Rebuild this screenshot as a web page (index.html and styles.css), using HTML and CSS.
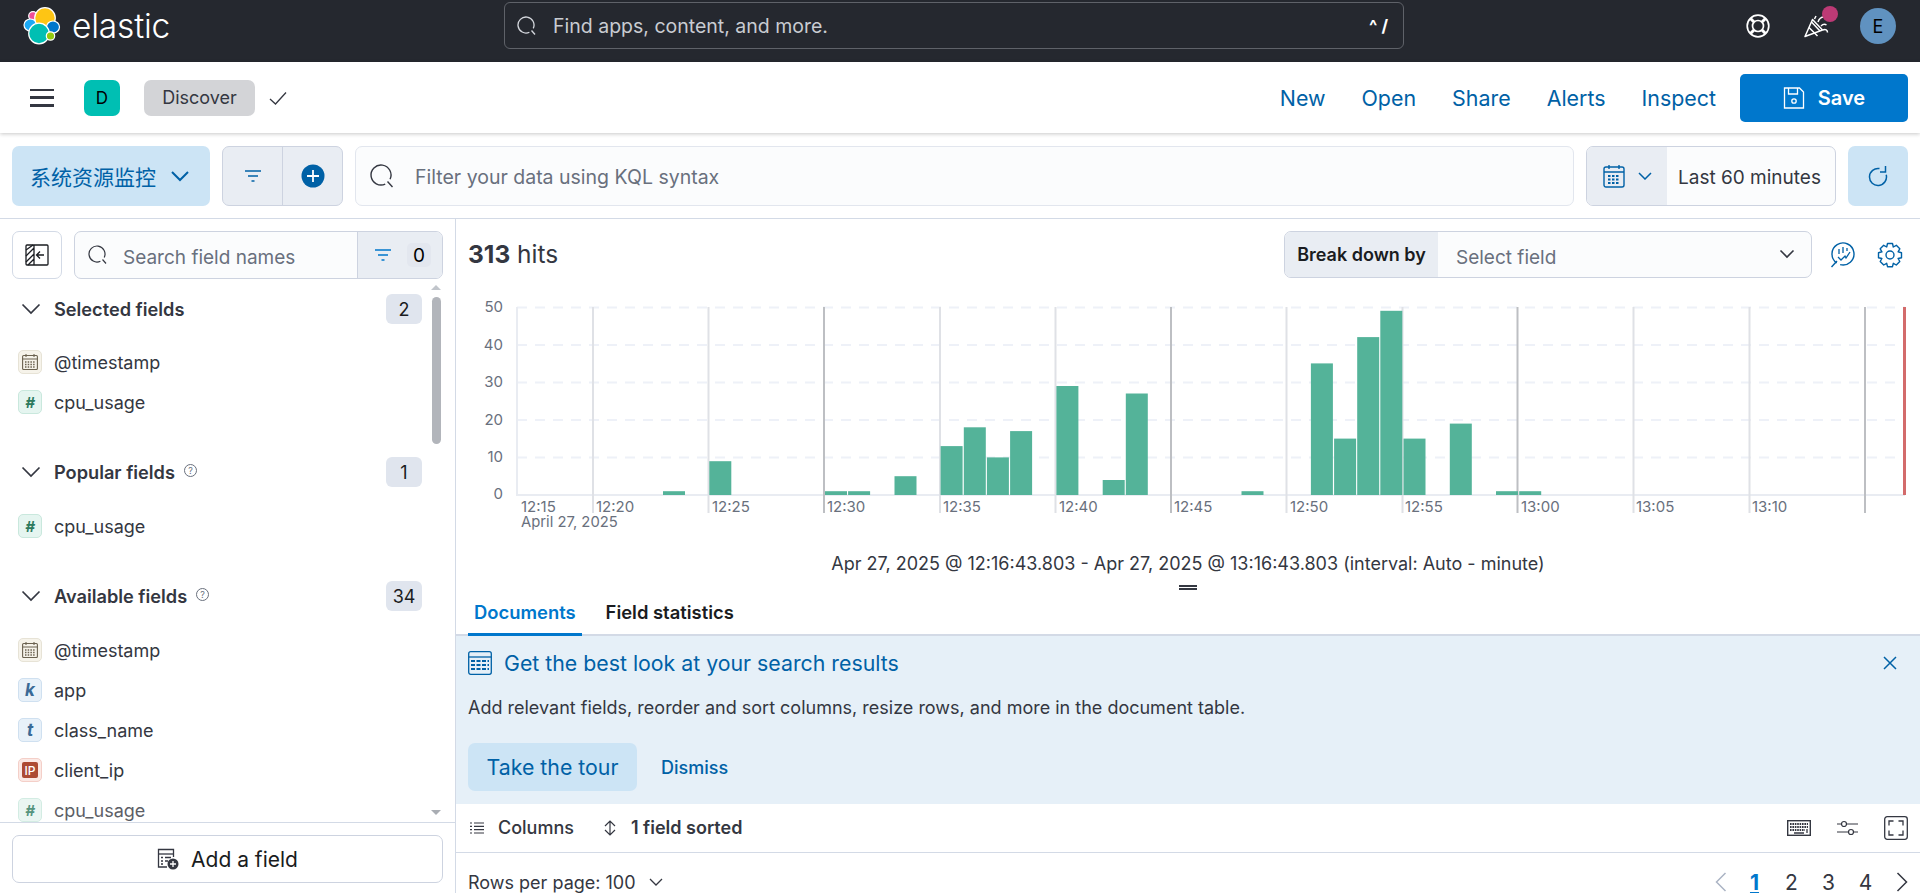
FILE: index.html
```html
<!DOCTYPE html>
<html lang="en">
<head>
<meta charset="utf-8">
<title>Discover - Elastic</title>
<link rel="stylesheet" href="styles.css">
</head>
<body>
<header class="topbar">
  <div class="brand">
    <svg class="logo" width="38" height="38" viewBox="0 0 38 38">
      <g stroke="#fff" stroke-width="1.200">
        <circle cx="10" cy="9" r="4.300" fill="#f04e98"/>
        <ellipse cx="7.500" cy="18" rx="6.500" ry="6" fill="#1ba9f5"/>
        <circle cx="22" cy="11" r="10.300" fill="#fec514"/>
        <ellipse cx="30" cy="20" rx="6.500" ry="6" fill="#0077cc"/>
        <circle cx="16" cy="26.500" r="10.300" fill="#00bfb3"/>
        <circle cx="27.500" cy="29" r="4.200" fill="#93c90e"/>
      </g>
    </svg>
    <span class="wordmark">elastic</span>
  </div>
  <div class="global-search">
    <svg class="ic" width="20" height="20" viewBox="0 0 20 20" fill="none" stroke="#d5d8de" stroke-width="1.300"><path d="M16.250 12.380A8 8 0 1 0 12.380 16.250"/><path d="M14.500 14.500l3.500 4"/></svg>
    <span class="gs-text">Find apps, content, and more.</span>
    <span class="gs-key">^ /</span>
  </div>
  <div class="top-icons">
    <svg width="26" height="26" viewBox="0 0 26 26" fill="none" stroke="#fff" stroke-width="1.700"><circle cx="13" cy="13" r="10.800"/><circle cx="13" cy="13" r="5.500"/><path d="M5.500 5.500l3.500 3.500M20.500 5.500L17 9M5.500 20.500L9 17M20.500 20.500L17 17" stroke-width="3"/></svg>
    <span class="party">
      <svg width="26" height="30" viewBox="0 0 26 30" fill="none" stroke="#fff" stroke-width="1.500" stroke-linejoin="round"><path d="M1 25.500l7.500-17 10 10.500z"/><path d="M5 16.500l8.500 8.500M7.500 11l8.500 9"/><path d="M10.500 8l1.500-3M14 11c1-3 3-5 6-5M17 15c2-2 4-2 5.500-1M19 19c2.500-1 4.500 0 4.500 2.500"/></svg>
      <i class="dot"></i>
    </span>
    <span class="avatar">E</span>
  </div>
</header>

<nav class="appbar">
  <button class="burger" aria-label="menu"><i></i><i></i><i></i></button>
  <span class="space">D</span>
  <span class="crumb">Discover</span>
  <svg class="check" width="20" height="20" viewBox="0 0 20 20" fill="none" stroke="#343741" stroke-width="1.300"><path d="M2 11l5.500 5L18 4.500"/></svg>
  <div class="menu">
    <a>New</a><a>Open</a><a>Share</a><a>Alerts</a><a>Inspect</a>
    <button class="save">
      <svg width="22" height="22" viewBox="0 0 22 22" fill="none" stroke="#fff" stroke-width="1.300"><path d="M1.500 1h15l4 4v16h-19z"/><path d="M5.500 1v6h9V1"/><circle cx="11" cy="14" r="2.200"/></svg>
      Save
    </button>
  </div>
</nav>

<section class="querybar">
  <button class="dataview">系统资源监控
    <svg width="20" height="12" viewBox="0 0 20 12" fill="none" stroke="#0061a6" stroke-width="2"><path d="M2 2l8 8 8-8"/></svg>
  </button>
  <div class="filter-group">
    <span class="fg-cell">
      <svg width="16" height="12" viewBox="0 0 16 12" fill="none" stroke="#0061a6" stroke-width="1.400"><path d="M0 1h16M3 6h10M6.500 11h3"/></svg>
    </span>
    <span class="fg-cell fg-sep">
      <svg width="24" height="24" viewBox="0 0 24 24"><circle cx="12" cy="12" r="11.500" fill="#0061a6"/><path d="M12 6v12M6 12h12" stroke="#fff" stroke-width="1.800"/></svg>
    </span>
  </div>
  <div class="kql">
    <svg width="26" height="26" viewBox="0 0 26 26" fill="none" stroke="#343741" stroke-width="1.400"><path d="M21.060 16.230A10 10 0 1 0 16.230 21.060"/><path d="M18.500 18.500l5 5.500"/></svg>
    <span>Filter your data using KQL syntax</span>
  </div>
  <div class="datepick">
    <span class="dp-left">
      <svg width="22" height="24" viewBox="0 0 22 24" fill="none" stroke="#0061a6" stroke-width="1.400"><rect x="1" y="3" width="20" height="20" rx="2"/><path d="M1 8h20M6 1v4M16 1v4"/><path d="M5 12h12M5 15.500h12M5 19h12" stroke-width="2" stroke-dasharray="2.500 1.500"/></svg>
      <svg width="14" height="8" viewBox="0 0 14 8" fill="none" stroke="#0061a6" stroke-width="1.500"><path d="M1 1l6 6 6-6"/></svg>
    </span>
    <span class="dp-text">Last 60 minutes</span>
  </div>
  <button class="refresh" aria-label="refresh">
    <svg width="20" height="22" viewBox="0 0 20 22" fill="none" stroke="#0061a6" stroke-width="1.500"><path d="M11.500 3.600A8.500 8.500 0 1 0 18.200 9.800"/><path d="M17.500 1v6H12"/></svg>
  </button>
</section>

<div class="workspace">
  <aside class="sidebar">
    <div class="side-top">
      <button class="collapse" aria-label="collapse">
        <svg width="24" height="22" viewBox="0 0 24 22" fill="none" stroke="#1a1c21" stroke-width="1.300"><rect x="1" y="1" width="22" height="20" rx="1"/><path d="M1 6l7-5M1 12l8-8M1 18l8-8M3 21l6-6M9 1v20" /><path d="M19 11h-7M15 7.500L11.500 11l3.500 3.500"/></svg>
      </button>
      <div class="fieldsearch">
        <span class="fs-input">
          <svg width="20" height="20" viewBox="0 0 20 20" fill="none" stroke="#343741" stroke-width="1.200"><path d="M16.250 12.380A8 8 0 1 0 12.380 16.250"/><path d="M14.500 14.500l3.500 4"/></svg>
          <span>Search field names</span>
        </span>
        <span class="fs-filter">
          <svg width="16" height="12" viewBox="0 0 16 12" fill="none" stroke="#0077cc" stroke-width="1.400"><path d="M0 1h16M3 6h10M6.500 11h3"/></svg>
          <b class="zero">0</b>
        </span>
      </div>
    </div>
    <div class="fieldlist">
      <div class="scroll-inner">
        <div class="grp">
          <svg class="chev" width="20" height="12" viewBox="0 0 20 12" fill="none" stroke="#343741" stroke-width="1.700"><path d="M1.500 1.500L10 10l8.500-8.500"/></svg>
          <span class="grp-title">Selected fields</span>
          <span class="count">2</span>
        </div>
        <ul class="fields sel">
          <li><i class="tk tk-date"><svg width="16" height="16" viewBox="0 0 16 16" fill="none" stroke="#6b6250" stroke-width="1.100"><rect x=".6" y="1.500" width="14.800" height="14" rx="1"/><path d="M.6 5h14.800M4 0v3M12 0v3"/><path d="M3 8h10M3 10.500h10M3 13h10" stroke-dasharray="1.500 1.200" stroke-width="1.300"/></svg></i>@timestamp</li>
          <li><i class="tk tk-num">#</i>cpu_usage</li>
        </ul>
        <div class="grp">
          <svg class="chev" width="20" height="12" viewBox="0 0 20 12" fill="none" stroke="#343741" stroke-width="1.700"><path d="M1.500 1.500L10 10l8.500-8.500"/></svg>
          <span class="grp-title">Popular fields</span>
          <span class="help">?</span>
          <span class="count">1</span>
        </div>
        <ul class="fields pop">
          <li><i class="tk tk-num">#</i>cpu_usage</li>
        </ul>
        <div class="grp">
          <svg class="chev" width="20" height="12" viewBox="0 0 20 12" fill="none" stroke="#343741" stroke-width="1.700"><path d="M1.500 1.500L10 10l8.500-8.500"/></svg>
          <span class="grp-title">Available fields</span>
          <span class="help">?</span>
          <span class="count">34</span>
        </div>
        <ul class="fields avail">
          <li><i class="tk tk-date"><svg width="16" height="16" viewBox="0 0 16 16" fill="none" stroke="#6b6250" stroke-width="1.100"><rect x=".6" y="1.500" width="14.800" height="14" rx="1"/><path d="M.6 5h14.800M4 0v3M12 0v3"/><path d="M3 8h10M3 10.500h10M3 13h10" stroke-dasharray="1.500 1.200" stroke-width="1.300"/></svg></i>@timestamp</li>
          <li><i class="tk tk-kw">k</i>app</li>
          <li><i class="tk tk-kw">t</i>class_name</li>
          <li><i class="tk tk-ip"><b>IP</b></i>client_ip</li>
          <li class="fade"><i class="tk tk-num">#</i>cpu_usage</li>
        </ul>
      </div>
      <div class="scrollbar">
        <i class="arrow up"></i>
        <i class="thumb"></i>
        <i class="arrow down"></i>
      </div>
    </div>
    <div class="side-foot">
      <button class="addfield">
        <svg width="22" height="22" viewBox="0 0 22 22" fill="none" stroke="#343741" stroke-width="1.300"><path d="M10 19H1.500V1.500h15V9"/><path d="M1.500 6h15"/><path d="M4 9.500h2M8 9.500h6M4 13h2M8 13h3M4 16h2" stroke-width="1.500"/><circle cx="16" cy="16" r="5.500" fill="#343741" stroke="none"/><path d="M16 13v6M13 16h6" stroke="#fff" stroke-width="1.300"/></svg>
        Add a field
      </button>
    </div>
  </aside>

  <main class="main">
    <div class="hitsrow">
      <div class="hits"><b>313</b> hits</div>
      <div class="breakdown">
        <span class="bd-label">Break down by</span>
        <span class="bd-select">Select field
          <svg width="16" height="10" viewBox="0 0 16 10" fill="none" stroke="#343741" stroke-width="1.600"><path d="M1.500 1.500L8 8l6.500-6.500"/></svg>
        </span>
      </div>
      <svg class="bd-ic" width="26" height="26" viewBox="0 0 26 26" fill="none" stroke="#0061a6" stroke-width="1.400"><path d="M6.700 21A11 11 0 1 1 10.150 22.600"/><path d="M7 19l-5.500 6"/><path d="M8 15l3 3 4-4 1 2 4-6M9 7v5M13 5v6M17 6v3" stroke-width="1.300"/></svg>
      <svg class="bd-ic" width="26" height="26" viewBox="0 0 26 26" fill="none" stroke="#0061a6" stroke-width="1.400"><circle cx="13" cy="13" r="4"/><path d="M10.500 1.500h5l.8 3.500 3-1.700 3.500 3.500-1.700 3 3.400.9v5l-3.400.8 1.700 3-3.500 3.500-3-1.700-.8 3.400h-5l-.8-3.400-3 1.700-3.500-3.500 1.700-3-3.400-.8v-5l3.400-.9-1.700-3 3.500-3.500 3 1.700z" stroke-linejoin="round"/></svg>
    </div>
    <svg class="chart" width="1464" height="250" viewBox="456 290 1464 250">
      <g class="grid">
        <path d="M517 307.500H1905M517 345H1905M517 382.500H1905M517 420H1905M517 457.500H1905"/>
      </g>
      <path class="axis0" d="M517 307V495H1905"/>
      <path class="tick" d="M593 307V513M708.500 307V513M940 307V513M1055.500 307V513M1286.500 307V513M1402.500 307V513M1633.500 307V513M1749.500 307V513"/>
      <path class="tick-dark" d="M824 307V513M1171 307V513M1517.500 307V513M1865 307V513"/>
      <g class="bars">
        <rect x="663" y="491.200" width="22" height="3.800"/>
        <rect x="709.300" y="461.200" width="22" height="33.800"/>
        <rect x="825" y="491.200" width="22" height="3.800"/>
        <rect x="848.100" y="491.200" width="22" height="3.800"/>
        <rect x="894.500" y="476.200" width="22" height="18.800"/>
        <rect x="940.600" y="446.100" width="22" height="48.900"/>
        <rect x="963.800" y="427.300" width="22" height="67.700"/>
        <rect x="986.900" y="457.400" width="22" height="37.600"/>
        <rect x="1010.100" y="431.100" width="22" height="63.900"/>
        <rect x="1056.400" y="386" width="22" height="109"/>
        <rect x="1102.700" y="480" width="22" height="15"/>
        <rect x="1125.800" y="393.500" width="22" height="101.500"/>
        <rect x="1241.500" y="491.200" width="22" height="3.800"/>
        <rect x="1310.900" y="363.400" width="22" height="131.600"/>
        <rect x="1334.100" y="438.600" width="22" height="56.400"/>
        <rect x="1357.200" y="337.100" width="22" height="157.900"/>
        <rect x="1380.300" y="310.800" width="22" height="184.200"/>
        <rect x="1403.500" y="438.600" width="22" height="56.400"/>
        <rect x="1449.800" y="423.600" width="22" height="71.400"/>
        <rect x="1496" y="491.200" width="22" height="3.800"/>
        <rect x="1519.200" y="491.200" width="22" height="3.800"/>
      </g>
      <rect class="now" x="1903" y="307" width="3" height="188"/>
      <g class="ylab">
        <text x="503" y="312">50</text><text x="503" y="349.500">40</text><text x="503" y="387">30</text><text x="503" y="424.500">20</text><text x="503" y="462">10</text><text x="503" y="499">0</text>
      </g>
      <g class="xlab">
        <text x="521" y="512">12:15</text><text x="596" y="512">12:20</text><text x="712" y="512">12:25</text><text x="827" y="512">12:30</text><text x="943" y="512">12:35</text><text x="1059" y="512">12:40</text><text x="1174" y="512">12:45</text><text x="1290" y="512">12:50</text><text x="1405" y="512">12:55</text><text x="1521" y="512">13:00</text><text x="1636" y="512">13:05</text><text x="1752" y="512">13:10</text>
        <text class="xdate" x="521" y="527">April 27, 2025</text>
      </g>
    </svg>
    <div class="caption">Apr 27, 2025 @ 12:16:43.803 - Apr 27, 2025 @ 13:16:43.803 (interval: Auto - minute)</div>
    <div class="resize"><i></i><i></i></div>
    <div class="tabs">
      <span class="tab on">Documents</span>
      <span class="tab">Field statistics</span>
    </div>
    <div class="callout">
      <div class="co-head">
        <svg width="24" height="24" viewBox="0 0 24 24" fill="none" stroke="#0061a6" stroke-width="1.300"><rect x=".7" y=".7" width="22.600" height="22.600" rx="2"/><path d="M.7 6h22.600"/><path d="M3 10h18M3 14h18M3 18h18" stroke-width="1.800" stroke-dasharray="4 1.500"/></svg>
        <span class="co-title">Get the best look at your search results</span>
        <svg class="co-x" width="16" height="16" viewBox="0 0 16 16" fill="none" stroke="#0061a6" stroke-width="1.500"><path d="M2 2l12 12M14 2L2 14"/></svg>
      </div>
      <p class="co-text">Add relevant fields, reorder and sort columns, resize rows, and more in the document table.</p>
      <div class="co-actions">
        <button class="tour">Take the tour</button>
        <a class="dismiss">Dismiss</a>
      </div>
    </div>
    <div class="grid-tools">
      <svg width="14" height="12" viewBox="0 0 14 12" fill="none" stroke="#343741" stroke-width="1.200"><path d="M0 1h2M4 1h10M0 4.300h2M4 4.300h10M0 7.600h2M4 7.600h10M0 11h2M4 11h10"/></svg>
      <span class="gt-cols">Columns</span>
      <svg class="gt-sort" width="12" height="16" viewBox="0 0 12 16" fill="none" stroke="#343741" stroke-width="1.200"><path d="M6 1v14M1 6l5-5 5 5M1 10l5 5 5-5"/></svg>
      <span class="gt-sorted">1 field sorted</span>
      <span class="gt-right">
        <svg width="24" height="16" viewBox="0 0 24 16" fill="none" stroke="#343741"><rect x=".7" y=".7" width="22.600" height="14.600" stroke-width="1.400"/><path d="M3 4h18M3 7h18M3 10h15" stroke-width="1.800" stroke-dasharray="1.600 .8"/><path d="M7 13h10M20 9v4" stroke-width="1.300"/></svg>
        <svg width="21" height="16" viewBox="0 0 21 16" fill="none" stroke="#343741" stroke-width="1.200"><circle cx="7" cy="4" r="2.500"/><circle cx="14" cy="12" r="2.500"/><path d="M0 4h4.500M9.500 4H21M0 12h11.500M16.500 12H21"/></svg>
        <svg width="24" height="24" viewBox="0 0 24 24" fill="none" stroke="#343741" stroke-width="1.300"><rect x=".7" y=".7" width="22.600" height="22.600" rx="2.500"/><path d="M5 9.500V5h4.500M14.500 5H19v4.500M19 14.500V19h-4.500M9.500 19H5v-4.500"/></svg>
      </span>
    </div>
    <div class="pager-row">
      <span class="rpp">Rows per page: 100
        <svg width="14" height="8" viewBox="0 0 14 8" fill="none" stroke="#343741" stroke-width="1.300"><path d="M1 1l6 6 6-6"/></svg>
      </span>
      <span class="pager">
        <svg width="12" height="20" viewBox="0 0 12 20" fill="none" stroke="#abb4c4" stroke-width="1.500"><path d="M10.500 1L1.500 10l9 9"/></svg>
        <b class="pg cur">1</b><span class="pg">2</span><span class="pg">3</span><span class="pg">4</span>
        <svg class="pg-next" width="12" height="20" viewBox="0 0 12 20" fill="none" stroke="#343741" stroke-width="1.500"><path d="M1.500 1l9 9-9 9"/></svg>
      </span>
    </div>
  </main>
</div>
</body>
</html>
```
FILE: styles.css
```css
* { box-sizing: border-box; }
html, body { margin: 0; height: 100%; }
body {
  display: flex;
  flex-direction: column;
  height: 893px;
  overflow: hidden;
  font-family: Inter, "Noto Sans CJK SC", sans-serif;
  color: #343741;
  background: #fff;
}
button { font-family: inherit; border: 0; cursor: pointer; }
ul { list-style: none; margin: 0; padding: 0; }

.topbar {
  height: 62px;
  flex: none;
  display: flex;
  align-items: flex-start;
  background: #25282f;
  padding: 0 24px 0 23px;
}
.brand { width: 481px; flex: none; display: flex; align-items: center; gap: 11px; margin-top: 7px; }
.logo { flex: none; }
.wordmark { color: #fff; font-size: 33.500px; font-weight: 300; letter-spacing: -.2px; line-height: 38px; }
.global-search {
  width: 900px;
  height: 47px;
  flex: none;
  margin-top: 2px;
  border: 1px solid #5f6269;
  border-radius: 6px;
  display: flex;
  align-items: center;
  padding: 1px 15px 0 12px;
  color: #c9ccd2;
}
.gs-text { margin-left: 16px; font-size: 19.500px; }
.gs-key { margin-left: auto; color: #fff; font-size: 17px; font-weight: 700; }
.top-icons { margin-left: auto; margin-top: 8px; height: 36px; display: flex; align-items: center; gap: 30px; }
.party { display: block; position: relative; height: 30px; margin-left: 3px; }
.dot { position: absolute; top: -5px; left: 18px; width: 16px; height: 16px; border-radius: 50%; background: #bc3a75; }
.avatar {
  width: 36px; height: 36px; border-radius: 50%;
  background: #6092c0; color: #000; font-size: 18px;
  display: flex; align-items: center; justify-content: center;
}

.appbar {
  height: 71px;
  flex: none;
  display: flex;
  align-items: center;
  padding: 0 12px 0 30px;
  background: #fff;
  box-shadow: 0 1px 4px rgba(0,0,0,.22);
  position: relative;
}
.burger { width: 24px; height: 18px; padding: 0; background: none; display: flex; flex-direction: column; justify-content: space-between; }
.burger i { display: block; height: 2.500px; background: #343741; }
.space {
  margin-left: 30px; width: 36px; height: 36px; border-radius: 7px;
  background: #00bfb3; color: #000; font-size: 17px;
  display: flex; align-items: center; justify-content: center;
}
.crumb {
  margin-left: 24px; width: 111px; height: 36px; border-radius: 7px;
  background: #d3d4d7; font-size: 18px;
  display: flex; align-items: center; justify-content: center;
}
.check { margin-left: 13px; }
.menu { margin-left: auto; display: flex; align-items: center; gap: 36px; }
.menu a { color: #0061a6; font-size: 21.400px; font-weight: 400; }
.save {
  width: 168px; height: 48px; margin-left: -12px; border-radius: 5px;
  background: #0077cc; color: #fff; font-size: 20px; font-weight: 600;
  display: flex; align-items: center; justify-content: center; gap: 13px;
}

.querybar {
  height: 86px;
  flex: none;
  display: flex;
  align-items: center;
  gap: 12px;
  padding: 1px 12px 0;
  border-bottom: 1px solid #d3dae6;
}
.dataview {
  width: 198px; height: 60px; flex: none; border-radius: 7px; background: #cce4f5;
  color: #0061a6; font-size: 21px; font-weight: 400;
  display: flex; align-items: center; justify-content: center; gap: 14px; padding: 0 2px 0 0;
}
.filter-group {
  width: 121px; height: 60px; flex: none; display: flex;
  background: #e9edf3; border: 1px solid #cdd3e0; border-radius: 7px;
}
.fg-cell { flex: 1; display: flex; align-items: center; justify-content: center; }
.fg-sep { border-left: 1px solid #cdd3e0; }
.kql {
  flex: 1; height: 60px; background: #fbfcfd; border: 1px solid #e2e6ee; border-radius: 7px;
  display: flex; align-items: center; gap: 20px; padding: 2px 0 0 13px;
  color: #69707d; font-size: 19.500px;
}
.kql svg { margin-top: -2px; }
.datepick {
  width: 250px; height: 60px; flex: none; display: flex; overflow: hidden;
  border: 1px solid #cdd3e0; border-radius: 7px; background: #fbfcfd;
}
.dp-left { width: 80px; background: #e9edf3; display: flex; align-items: center; justify-content: center; gap: 13px; }
.dp-text { flex: 1; display: flex; align-items: center; padding: 3px 0 0 11px; color: #343741; font-size: 19px; }
.refresh {
  width: 60px; height: 60px; flex: none; border-radius: 7px; background: #cce4f5;
  display: flex; align-items: center; justify-content: center; padding: 0;
}

.workspace { flex: 1; display: flex; min-height: 0; }
.sidebar {
  width: 456px; flex: none; display: flex; flex-direction: column;
  border-right: 1px solid #d3dae6;
}
.side-top { flex: none; display: flex; gap: 12px; padding: 12px 12px 0; }
.collapse {
  width: 50px; height: 48px; flex: none; border-radius: 7px; background: #fff; border: 1px solid #d3dae6;
  display: flex; align-items: center; justify-content: center; padding: 0;
}
.fieldsearch {
  flex: 1; height: 48px; display: flex; border: 1px solid #cdd3e0; border-radius: 7px; overflow: hidden;
  background: #fbfcfd;
}
.fs-input { flex: 1; display: flex; align-items: center; gap: 15px; padding: 4px 0 0 13px; color: #69707d; font-size: 19px; }
.fs-input svg { margin-top: -4px; }
.fs-filter { width: 85px; background: #e9edf3; border-left: 1px solid #cdd3e0; display: flex; align-items: center; gap: 16px; padding-left: 17px; }
.zero { width: 24px; height: 24px; border-radius: 5px; background: #e3e7ef; color: #000; font-size: 19px; font-weight: 400; display: flex; align-items: center; justify-content: center; }

.fieldlist { flex: 1; min-height: 0; display: flex; position: relative; overflow: hidden; }
.scroll-inner { flex: 1; padding: 15px 0 0 21px; }
.grp { height: 30px; display: flex; align-items: center; width: 401px; }
.chev { flex: none; }
.grp-title { margin-left: 13px; font-size: 18.200px; font-weight: 600; color: #343741; }
.help {
  width: 13px; height: 13px; margin: -4px 0 0 9px; border: 1px solid #69707d; border-radius: 50%;
  font-size: 9px; color: #69707d; display: flex; align-items: center; justify-content: center;
}
.count {
  margin-left: auto; min-width: 36px; height: 30px; border-radius: 6px; background: #e0e5ee; color: #1a1c21;
  font-size: 18px; display: flex; align-items: center; justify-content: center;
}
.fields li { height: 40px; display: flex; align-items: center; margin-left: -3px; font-size: 18px; color: #343741; }
.fields.sel { padding: 18px 0 35px; }
.fields.pop { padding: 19px 0 35px; }
.fields.avail { padding: 19px 0 0; }
.fields li.fade { opacity: .8; }
.tk {
  width: 24px; height: 24px; flex: none; margin-right: 12px; border-radius: 5px; border: 1px solid;
  display: flex; align-items: center; justify-content: center;
  font-family: Inter, sans-serif; font-style: italic; font-weight: 700; font-size: 16px;
}
.tk-date { background: #f6f3ea; border-color: #e7e3d6; }
.tk-num { background: #e5f5f0; border-color: #c9e8dd; color: #2c7a5e; font-size: 15px; }
.tk-kw { background: #e8f1f9; border-color: #cfe0f0; color: #3a6a96; font-size: 17px; }
.tk-ip { background: #fbe9e5; border-color: #f4cfc8; }
.tk-ip b { display: flex; align-items: center; justify-content: center; width: 16px; height: 16px; border-radius: 2px; background: #ad4a33; color: #fff; font: 500 12px Inter, sans-serif; }
.scrollbar { width: 10px; margin-right: 14px; flex: none; display: flex; flex-direction: column; align-items: center; padding-top: 6px; }
.arrow { width: 0; height: 0; flex: none; border-left: 5px solid transparent; border-right: 5px solid transparent; }
.arrow.up { border-bottom: 5px solid #c1c5cb; }
.arrow.down { border-top: 5px solid #a9adb3; margin-top: 366px; }
.thumb { width: 9px; height: 147px; margin-top: 7px; border-radius: 5px; background: #b2b5bb; flex: none; }
.side-foot { height: 71px; flex: none; border-top: 1px solid #d3dae6; padding: 12px; }
.addfield {
  width: 100%; height: 48px; border-radius: 7px; background: #fff; border: 1px solid #cdd3e0;
  color: #1a1c21; font-size: 21px; display: flex; align-items: center; justify-content: center; gap: 12px;
}

.main { flex: 1; min-width: 0; display: flex; flex-direction: column; }
.hitsrow { height: 71px; flex: none; display: flex; align-items: flex-start; padding: 12px 17px 0 12px; }
.hits { margin-top: 8px; font-size: 24.500px; color: #343741; }
.hits b { font-weight: 700; }
.breakdown {
  margin-left: auto; width: 528px; height: 47px; display: flex; border: 1px solid #cdd3e0; border-radius: 7px; overflow: hidden;
  background: #fbfcfd;
}
.bd-label { width: 153px; background: #e9edf3; color: #1a1c21; font-size: 18px; font-weight: 600; display: flex; align-items: center; justify-content: center; }
.bd-select { flex: 1; display: flex; align-items: center; justify-content: space-between; padding: 6px 16px 0 18px; color: #69707d; font-size: 19px; }
.bd-select svg { margin-top: -7px; }
.bd-ic { flex: none; margin: 11px 0 0 18px; }
.bd-ic + .bd-ic { margin-left: 21px; }
.chart { display: block; flex: none; }
.grid path { stroke: #eef1f8; stroke-width: 2; stroke-dasharray: 10 8; fill: none; }
.axis0 { stroke: #e9ecf2; stroke-width: 2; fill: none; }
.tick { stroke: #dfe1e6; stroke-width: 2; fill: none; }
.tick-dark { stroke: #bdbfc3; stroke-width: 2; fill: none; }
.bars rect { fill: #54b399; }
.now { fill: #d36b6b; }
.ylab text { font: 15px Inter, sans-serif; fill: #69707d; text-anchor: end; }
.xlab text { font: 15px Inter, sans-serif; fill: #69707d; }
.xlab .xdate { font-size: 14.800px; }
.caption { height: 28px; flex: none; margin-top: 10px; text-align: center; font-size: 18px; color: #343741; line-height: 28px; }
.resize { height: 12px; flex: none; display: flex; flex-direction: column; align-items: center; gap: 1px; padding-top: 7px; }
.resize i { display: block; flex: none; width: 18px; height: 2px; background: #343741; }
.tabs { height: 46px; flex: none; display: flex; padding: 0 12px; border-bottom: 2px solid #d3dae6; }
.tab { padding: 0 6px; margin-right: 18px; display: flex; align-items: center; font-size: 18.400px; font-weight: 600; color: #1a1c21; height: 46px; border-bottom: 3px solid transparent; }
.tab.on { color: #0077cc; border-bottom-color: #0077cc; }
.callout { height: 168px; flex: none; background: #e6f0f8; padding: 12px 12px 0; }
.co-head { display: flex; align-items: center; gap: 12px; height: 30px; }
.co-title { font-size: 21.300px; font-weight: 400; color: #0061a6; }
.co-x { margin-left: auto; margin-right: 10px; }
.co-text { margin: 17px 0 0; font-size: 18px; line-height: 26px; color: #343741; }
.co-actions { display: flex; align-items: center; gap: 24px; margin-top: 22px; }
.tour { width: 169px; height: 48px; border-radius: 7px; background: #cce4f5; color: #0061a6; font-size: 21.300px; font-weight: 400; padding: 0; }
.dismiss { color: #0061a6; font-size: 18px; font-weight: 500; }
.grid-tools { height: 49px; flex: none; border-bottom: 1px solid #d3dae6; display: flex; align-items: center; padding: 0 12px 1px 14px; }
.gt-cols { margin-left: 14px; font-size: 18px; font-weight: 500; }
.gt-sort { margin-left: 30px; }
.gt-sorted { margin-left: 15px; font-size: 18px; font-weight: 600; }
.gt-right { margin-left: auto; display: flex; align-items: center; gap: 26px; }
.pager-row { flex: 1; display: flex; align-items: center; padding: 18px 12px 0; min-height: 0; }
.rpp { display: flex; align-items: center; gap: 13px; font-size: 18px; }
.pager { margin-left: auto; display: flex; align-items: center; font-size: 21px; }
.pg { width: 37px; text-align: center; }
.cur { margin-left: 9px; color: #0077cc; font-weight: 700; text-decoration: underline; }
.pg-next { margin-left: 12px; }
```
